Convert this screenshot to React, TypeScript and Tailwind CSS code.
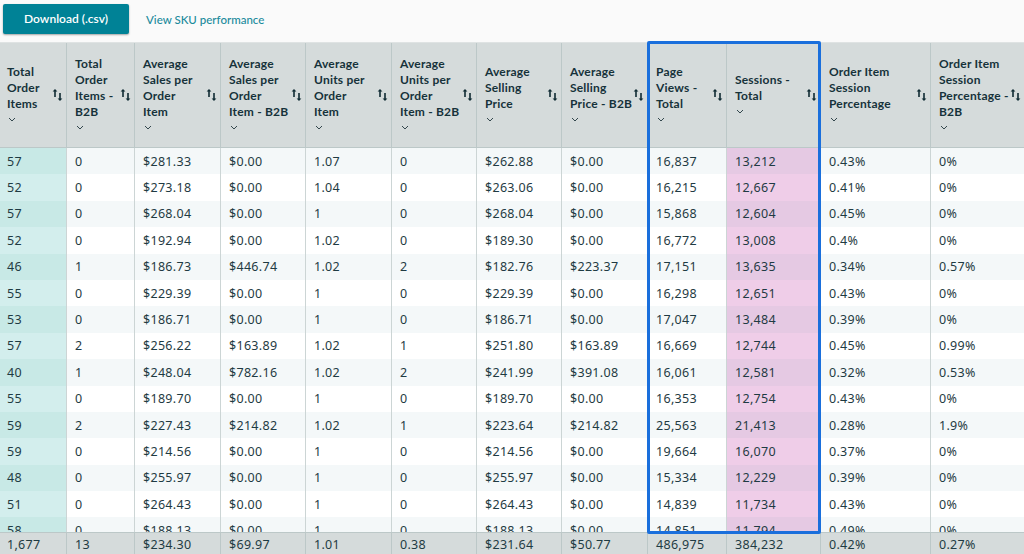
const columns = [
  { title: ['Total', 'Order', 'Items'], width: 'w-[67px]' },
  { title: ['Total', 'Order', 'Items -', 'B2B'], width: 'w-[68px]' },
  { title: ['Average', 'Sales per', 'Order', 'Item'], width: 'w-[86px]' },
  { title: ['Average', 'Sales per', 'Order', 'Item - B2B'], width: 'w-[85px]' },
  { title: ['Average', 'Units per', 'Order', 'Item'], width: 'w-[86px]' },
  { title: ['Average', 'Units per', 'Order', 'Item - B2B'], width: 'w-[85px]' },
  { title: ['Average', 'Selling', 'Price'], width: 'w-[85px]' },
  { title: ['Average', 'Selling', 'Price - B2B'], width: 'w-[86px]' },
  { title: ['Page', 'Views -', 'Total'], width: 'w-[79px]' },
  { title: ['Sessions -', 'Total'], width: 'w-[94px]' },
  { title: ['Order Item', 'Session', 'Percentage'], width: 'w-[110px]' },
  { title: ['Order Item', 'Session', 'Percentage -', 'B2B'], width: 'w-[93px]' },
];

const rows = [
  ['57', '0', '$281.33', '$0.00', '1.07', '0', '$262.88', '$0.00', '16,837', '13,212', '0.43%', '0%'],
  ['52', '0', '$273.18', '$0.00', '1.04', '0', '$263.06', '$0.00', '16,215', '12,667', '0.41%', '0%'],
  ['57', '0', '$268.04', '$0.00', '1', '0', '$268.04', '$0.00', '15,868', '12,604', '0.45%', '0%'],
  ['52', '0', '$192.94', '$0.00', '1.02', '0', '$189.30', '$0.00', '16,772', '13,008', '0.4%', '0%'],
  ['46', '1', '$186.73', '$446.74', '1.02', '2', '$182.76', '$223.37', '17,151', '13,635', '0.34%', '0.57%'],
  ['55', '0', '$229.39', '$0.00', '1', '0', '$229.39', '$0.00', '16,298', '12,651', '0.43%', '0%'],
  ['53', '0', '$186.71', '$0.00', '1', '0', '$186.71', '$0.00', '17,047', '13,484', '0.39%', '0%'],
  ['57', '2', '$256.22', '$163.89', '1.02', '1', '$251.80', '$163.89', '16,669', '12,744', '0.45%', '0.99%'],
  ['40', '1', '$248.04', '$782.16', '1.02', '2', '$241.99', '$391.08', '16,061', '12,581', '0.32%', '0.53%'],
  ['55', '0', '$189.70', '$0.00', '1', '0', '$189.70', '$0.00', '16,353', '12,754', '0.43%', '0%'],
  ['59', '2', '$227.43', '$214.82', '1.02', '1', '$223.64', '$214.82', '25,563', '21,413', '0.28%', '1.9%'],
  ['59', '0', '$214.56', '$0.00', '1', '0', '$214.56', '$0.00', '19,664', '16,070', '0.37%', '0%'],
  ['48', '0', '$255.97', '$0.00', '1', '0', '$255.97', '$0.00', '15,334', '12,229', '0.39%', '0%'],
  ['51', '0', '$264.43', '$0.00', '1', '0', '$264.43', '$0.00', '14,839', '11,734', '0.43%', '0%'],
  ['58', '0', '$188.13', '$0.00', '1', '0', '$188.13', '$0.00', '14,851', '11,794', '0.49%', '0%'],
];

const totals = ['1,677', '13', '$234.30', '$69.97', '1.01', '0.38', '$231.64', '$50.77', '486,975', '384,232', '0.42%', '0.27%'];

function SortIcon() {
  return (
    <svg width="11" height="14" viewBox="0 0 11 14" className="shrink-0 text-[#0f2b33]">
      <path d="M3 1 L5.4 3.6 H3.8 V9 H2.2 V3.6 H0.6 Z" fill="currentColor" />
      <path d="M8 13 L5.6 10.4 H7.2 V5 H8.8 V10.4 H10.4 Z" fill="currentColor" />
    </svg>
  );
}

function Chevron() {
  return (
    <svg width="8" height="5" viewBox="0 0 8 5" className="mt-[5px] ml-px block text-[#33474d]">
      <path d="M1 1 L4 4 L7 1" fill="none" stroke="currentColor" strokeWidth="1" />
    </svg>
  );
}

function bodyCellClass(col: number, odd: boolean) {
  if (col === 0) return odd ? 'bg-[#c8e9e6]' : 'bg-[#d3eeed]';
  if (col === 9) return odd ? 'bg-[#e5c9e3]' : 'bg-[#efcde8]';
  return odd ? 'bg-[#f4f8f9]' : 'bg-white';
}

export default function App() {
  return (
    <div className="relative flex h-[554px] w-[1024px] flex-col overflow-hidden bg-[#fafafa] font-['Noto_Sans',sans-serif] text-[12.5px] text-[#1f3b43]">
      <div className="flex h-[43px] shrink-0 items-start border-b border-[#dfe3e3] pl-[3px] pt-[4px]">
        <button className="h-[30px] w-[126px] rounded-[2px] bg-[#008296] font-['Lato',sans-serif] text-[12px] font-semibold text-white shadow-[0_1px_2px_rgba(0,0,0,0.35)]">
          Download (.csv)
        </button>
        <a className="ml-[17px] mt-[7px] font-['Lato',sans-serif] text-[11.5px] font-medium text-[#1a8a9c]">View SKU performance</a>
      </div>

      <div className="min-h-0 flex-1 overflow-hidden">
        <table className="w-[1024px] table-fixed border-separate border-spacing-0">
          <colgroup>
            {columns.map((c, i) => (
              <col key={i} className={c.width} />
            ))}
          </colgroup>
          <thead>
            <tr className="h-[105px] bg-[#d5dbdb]">
              {columns.map((c, i) => (
                <th key={i} className="border-r border-b border-[#bcc8c8] p-0 text-left font-bold last:border-r-0">
                  <div className="flex items-center justify-between pl-[8px] pr-[3px] [th:first-child>&]:pl-[7px]">
                    <div className="pb-[5px] font-['Lato',sans-serif] text-[12px] leading-[16px] tracking-[0.2px] text-[#16323a]">
                      {c.title.map((line, j) => (
                        <div key={j} className="whitespace-nowrap">{line}</div>
                      ))}
                      <Chevron />
                    </div>
                    <SortIcon />
                  </div>
                </th>
              ))}
            </tr>
          </thead>
          <tbody>
            {rows.map((row, r) => (
              <tr key={r} className="h-[26.4px]">
                {row.map((value, c) => (
                  <td
                    key={c}
                    className={`border-r border-[#ccd5d5] p-0 pl-[8px] pt-px whitespace-nowrap leading-[16px] tracking-[0.3px] first:pl-[7px] last:border-r-0 ${bodyCellClass(c, r % 2 === 0)}`}
                  >
                    {value}
                  </td>
                ))}
              </tr>
            ))}
          </tbody>
        </table>
      </div>

      <div className="flex h-[22px] shrink-0 border-t border-[#bcc8c8] bg-[#d5dbdb]">
        {totals.map((value, i) => (
          <div
            key={i}
            className={`${columns[i].width} flex items-center border-r border-[#bcc8c8] pl-[8px] pt-[4px] tracking-[0.3px] first:pl-[7px] last:border-r-0`}
          >
            {value}
          </div>
        ))}
      </div>

      <div className="absolute left-[647px] top-[41px] h-[493px] w-[174px] rounded-[2px] border-[3px] border-[#1a6fdc]" />
    </div>
  );
}
